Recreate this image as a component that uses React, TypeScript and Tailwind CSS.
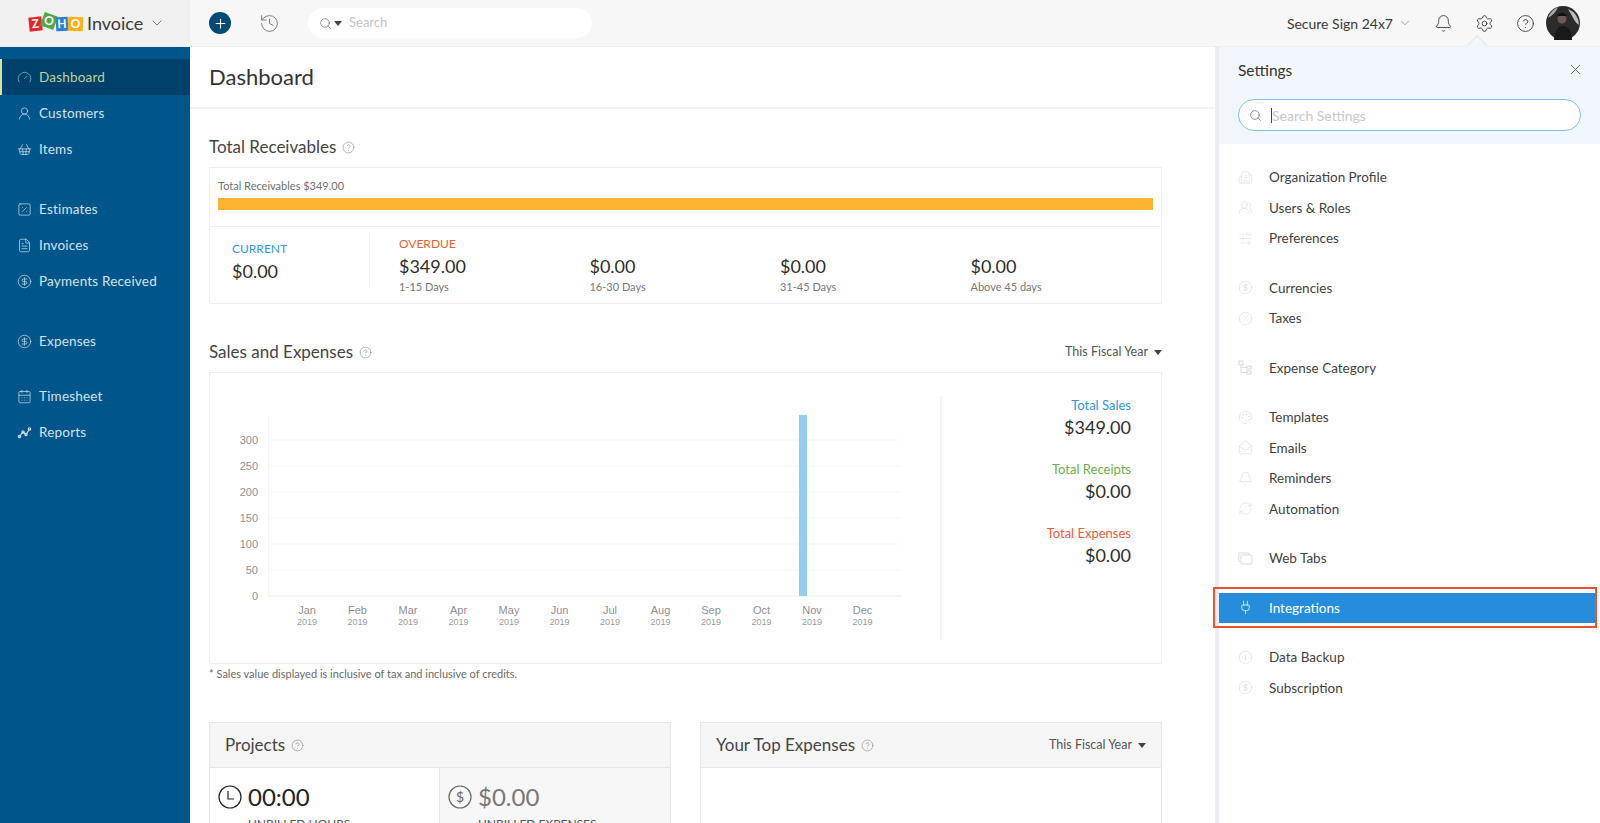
import {
  Bell,
  Building2,
  ChevronDown,
  CircleDollarSign,
  CircleHelp,
  CirclePercent,
  FileText,
  History,
  MailOpen,
  Palette,
  Plug,
  Plus,
  RefreshCw,
  Search,
  Settings,
  ShoppingBasket,
  SlidersHorizontal,
  SquarePercent,
  UserRound,
  UsersRound,
  X,
  CalendarDays,
  Gauge,
  CircleArrowDown,
} from "lucide-react";

const font = "[font-family:Lato,'Open_Sans',sans-serif]";

function Caret() {
  return (
    <svg width="8" height="5" viewBox="0 0 8 5" className="shrink-0">
      <path d="M0 0h8L4 5z" fill="#444" />
    </svg>
  );
}

function Help() {
  return <CircleHelp size={13} strokeWidth={1.2} className="text-[#8d8d8d] shrink-0" />;
}

function ReportsIcon() {
  return (
    <svg width="15" height="15" viewBox="0 0 15 15" fill="none" stroke="currentColor" strokeWidth="1.1">
      <path d="M2.5 11.5 6 7l3 2.5L12.5 4" />
      <circle cx="2.5" cy="11.5" r="1.2" />
      <circle cx="6" cy="7" r="1.2" />
      <circle cx="9" cy="9.5" r="1.2" />
      <circle cx="12.5" cy="4" r="1.2" />
    </svg>
  );
}

function TreeIcon() {
  return (
    <svg width="14" height="15" viewBox="0 0 14 15" fill="none" stroke="currentColor" strokeWidth="1">
      <rect x="1" y="1" width="4" height="4" />
      <rect x="9" y="6" width="4" height="3" />
      <rect x="9" y="11" width="4" height="3" />
      <path d="M3 5v7.5h6M3 7.5h6" />
    </svg>
  );
}

function TabsIcon() {
  return (
    <svg width="15" height="13" viewBox="0 0 15 13" fill="none" stroke="currentColor" strokeWidth="1">
      <path d="M2 9.5H.8V1h10v1.5" />
      <rect x="3" y="3" width="11" height="9" rx="1" />
    </svg>
  );
}

function Logo() {
  const tiles = [
    { l: "Z", c: "bg-[#e2262c] -rotate-6 mt-[3px]", w: "w-[13px]" },
    { l: "O", c: "bg-[#4fa845] rotate-[20deg]", w: "w-[14px]" },
    { l: "H", c: "bg-[#2a7fd0] -rotate-3 mt-[3px]", w: "w-[12px]" },
    { l: "O", c: "bg-[#f8b21c] rotate-2 mt-[3px]", w: "w-[15px]" },
  ];
  return (
    <div className="flex items-start h-[18px]">
      {tiles.map((t, i) => (
        <span
          key={i}
          className={`${t.w} h-[14px] ${t.c} flex items-center justify-center text-white text-[12px] font-bold leading-none`}
        >
          {t.l}
        </span>
      ))}
    </div>
  );
}

const navGroups = [
  [
    { label: "Dashboard", icon: <Gauge size={15} strokeWidth={1.1} />, active: true },
    { label: "Customers", icon: <UserRound size={15} strokeWidth={1.1} /> },
    { label: "Items", icon: <ShoppingBasket size={15} strokeWidth={1.1} /> },
  ],
  [
    { label: "Estimates", icon: <SquarePercent size={15} strokeWidth={1.1} /> },
    { label: "Invoices", icon: <FileText size={15} strokeWidth={1.1} /> },
    { label: "Payments Received", icon: <CircleDollarSign size={15} strokeWidth={1.1} /> },
  ],
  [{ label: "Expenses", icon: <CircleDollarSign size={15} strokeWidth={1.1} /> }],
  [
    { label: "Timesheet", icon: <CalendarDays size={15} strokeWidth={1.1} /> },
    { label: "Reports", icon: <ReportsIcon /> },
  ],
];

const settingGroups = [
  [
    { label: "Organization Profile", icon: <Building2 size={15} strokeWidth={1} /> },
    { label: "Users & Roles", icon: <UsersRound size={15} strokeWidth={1} /> },
    { label: "Preferences", icon: <SlidersHorizontal size={15} strokeWidth={1} /> },
  ],
  [
    { label: "Currencies", icon: <CircleDollarSign size={15} strokeWidth={1} /> },
    { label: "Taxes", icon: <CirclePercent size={15} strokeWidth={1} /> },
  ],
  [{ label: "Expense Category", icon: <TreeIcon /> }],
  [
    { label: "Templates", icon: <Palette size={15} strokeWidth={1} /> },
    { label: "Emails", icon: <MailOpen size={15} strokeWidth={1} /> },
    { label: "Reminders", icon: <Bell size={15} strokeWidth={1} /> },
    { label: "Automation", icon: <RefreshCw size={15} strokeWidth={1} /> },
  ],
  [{ label: "Web Tabs", icon: <TabsIcon /> }],
  [{ label: "Integrations", icon: <Plug size={15} strokeWidth={1.2} />, selected: true }],
  [
    { label: "Data Backup", icon: <CircleArrowDown size={15} strokeWidth={1} /> },
    { label: "Subscription", icon: <CircleDollarSign size={15} strokeWidth={1} /> },
  ],
];

const months = ["Jan", "Feb", "Mar", "Apr", "May", "Jun", "Jul", "Aug", "Sep", "Oct", "Nov", "Dec"];
const ticks = [300, 250, 200, 150, 100, 50, 0];

function Chart() {
  return (
    <svg
      width="730"
      height="290"
      viewBox="210 373 730 290"
      className="shrink-0 [font-family:'Liberation_Sans',sans-serif]"
    >
      <line x1="268.5" y1="415" x2="268.5" y2="596" stroke="#f4f4f4" />
      {ticks.map((t, i) => (
        <g key={t}>
          <line x1="268" y1={440 + i * 26} x2="902" y2={440 + i * 26} stroke={t === 0 ? "#ececec" : "#f5f5f5"} />
          <text x="258" y={444 + i * 26} textAnchor="end" fontSize="11" fill="#8f8f8f">
            {t}
          </text>
        </g>
      ))}
      <rect x="799" y="415" width="8" height="181" fill="#93cbf5" />
      {months.map((m, i) => (
        <g key={m} textAnchor="middle">
          <text x={307 + i * 50.5} y="614" fontSize="11" fill="#8f8f8f">
            {m}
          </text>
          <text x={307 + i * 50.5} y="625" fontSize="9" fill="#9a9a9a">
            2019
          </text>
        </g>
      ))}
    </svg>
  );
}

function Aging({ label, amount, days }: { label?: string; amount: string; days: string }) {
  return (
    <div className="w-[192px] pt-[8px]">
      <div className="h-[18px] text-[12px] leading-[18px] text-[#ee5c2e]">{label}</div>
      <div className="h-[26px] text-[18px] leading-[26px] text-[#2d2d2d]">{amount}</div>
      <div className="mt-[1px] h-[14px] text-[11px] leading-[14px] text-[#777]">{days}</div>
    </div>
  );
}

export default function App() {
  return (
    <div className={`relative h-screen w-full overflow-hidden bg-white flex flex-col ${font}`}>
      {/* top bar */}
      <header className="h-[47px] shrink-0 flex items-center bg-[#f7f7f7] border-b border-[#eeeeee]">
        <div className="w-[190px] h-full shrink-0 bg-[#f0f0f0] flex items-center pl-[29px]">
          <Logo />
          <span className="ml-[4px] text-[18px] text-[#3a3a3a]">Invoice</span>
          <ChevronDown size={16} strokeWidth={1.2} className="ml-[6px] text-[#555]" />
        </div>
        <div className="ml-[19px] w-[22px] h-[22px] rounded-full bg-[#004a76] flex items-center justify-center">
          <Plus size={15} strokeWidth={1.8} className="text-white" />
        </div>
        <History size={21} strokeWidth={1.1} className="ml-[28px] text-[#777]" />
        <div className="ml-[28px] w-[284px] h-[30px] rounded-full bg-white flex items-center pl-[11px]">
          <Search size={13} strokeWidth={1.4} className="text-[#777]" />
          <span className="ml-[2px]">
            <Caret />
          </span>
          <span className="ml-[7px] text-[13px] text-[#c4c4c4]">Search</span>
        </div>
        <div className="ml-auto flex items-center pr-[20px]">
          <span className="text-[14px] text-[#3a3a3a]">Secure Sign 24x7</span>
          <ChevronDown size={14} strokeWidth={1} className="ml-[5px] text-[#666]" />
          <Bell size={19} strokeWidth={1.1} className="ml-[22px] text-[#333]" />
          <Settings size={19} strokeWidth={1.1} className="ml-[22px] text-[#333]" />
          <CircleHelp size={19} strokeWidth={1.1} className="ml-[22px] text-[#333]" />
          <svg width="34" height="34" viewBox="0 0 34 34" className="ml-[11px]">
            <circle cx="17" cy="17" r="17" fill="#2b2b2b" />
            <path d="M22 3a17 17 0 0 1 11 16c-4-2-6-8-11-16z" fill="#bdbdbd" />
            <path d="M2 12C4 6 8 3 12 1c-2 5-5 8-10 11z" fill="#a8a8a8" />
            <circle cx="16" cy="13" r="4.5" fill="#6b5a55" />
            <path d="M11 10c2-4 8-4 10 0z" fill="#111" />
            <path d="M8 34c0-9 4-14 9-14s9 5 9 14z" fill="#191919" />
          </svg>
        </div>
      </header>

      <div className="flex-1 flex min-h-0">
        {/* sidebar */}
        <nav className="w-[190px] shrink-0 bg-[#00568a] pt-[12px] text-[13.5px] tracking-[0.2px]">
          {navGroups.map((group, gi) => (
            <div key={gi} className={gi === 0 ? "" : gi === 3 ? "mt-[19px]" : "mt-[24px]"}>
              {group.map((item: any) => (
                <div
                  key={item.label}
                  className={
                    item.active
                      ? "h-[36px] flex items-center pl-[15px] bg-[#00416c] border-l-2 border-[#d7e2a6] text-[#bcd59a]"
                      : "h-[36px] flex items-center pl-[15px] border-l-2 border-transparent text-[#d4e3ee]"
                  }
                >
                  <span className={item.active ? "w-[22px] text-[#9fc3dc]" : "w-[22px] text-[#d4e3ee]"}>{item.icon}</span>
                  {item.label}
                </div>
              ))}
            </div>
          ))}
        </nav>

        {/* main column */}
        <main className="flex-1 min-w-0 overflow-hidden">
          <div className="h-[62px] border-b-2 border-[#f2f2f2] flex items-center pl-[19px] pb-[2px]">
            <h1 className="text-[22px] text-[#333]">Dashboard</h1>
          </div>

          <div className="ml-[19px] w-[953px]">
            <div className="mt-[26px] h-[24px] flex items-center gap-[6px] text-[17px] text-[#444]">
              Total Receivables <Help />
            </div>
            <section className="mt-[8px] h-[137px] border border-[#eeeeee]">
              <div className="h-[59px] border-b border-[#eeeeee] px-[8px]">
                <div className="pt-[10px] h-[30px] text-[11px] leading-[15px] text-[#6f6f6f]">Total Receivables $349.00</div>
                <div className="h-[12px] bg-[#ffb431]" />
              </div>
              <div className="flex">
                <div className="w-[161px] h-[55px] mt-[7px] border-r border-[#efefef] pl-[22px] pt-[6px] mr-[29px]">
                  <div className="h-[18px] text-[12px] leading-[18px] text-[#2f96e6]">CURRENT</div>
                  <div className="h-[26px] text-[18px] leading-[26px] text-[#2d2d2d]">$0.00</div>
                </div>
                <Aging label="OVERDUE" amount="$349.00" days="1-15 Days" />
                <Aging amount="$0.00" days="16-30 Days" />
                <Aging amount="$0.00" days="31-45 Days" />
                <Aging amount="$0.00" days="Above 45 days" />
              </div>
            </section>

            <div className="mt-[36px] h-[24px] flex items-center gap-[6px] text-[17px] text-[#444]">
              Sales and Expenses <Help />
              <span className="ml-auto flex items-center gap-[6px] text-[12.5px] text-[#555]">
                This Fiscal Year <Caret />
              </span>
            </div>
            <section className="mt-[8px] h-[292px] border border-[#eeeeee] flex">
              <Chart />
              <div className="flex-1 my-[23px] border-l-2 border-[#f3f3f3] pr-[30px] text-right">
                <div className="h-[18px] text-[13px] leading-[18px] text-[#2f96e6]">Total Sales</div>
                <div className="h-[26px] text-[18px] leading-[26px] text-[#2d2d2d] mb-[20px]">$349.00</div>
                <div className="h-[18px] text-[13px] leading-[18px] text-[#6ab04c]">Total Receipts</div>
                <div className="h-[26px] text-[18px] leading-[26px] text-[#2d2d2d] mb-[20px]">$0.00</div>
                <div className="h-[18px] text-[13px] leading-[18px] text-[#ee5c3a]">Total Expenses</div>
                <div className="h-[26px] text-[18px] leading-[26px] text-[#2d2d2d]">$0.00</div>
              </div>
            </section>
            <p className="mt-[3px] h-[14px] text-[11px] leading-[14px] text-[#6a6a6a]">
              * Sales value displayed is inclusive of tax and inclusive of credits.
            </p>

            <div className="mt-[41px] flex gap-[29px]">
              <section className="w-[462px] border border-[#e6e6e6]">
                <div className="h-[45px] bg-[#f5f5f5] border-b border-[#e6e6e6] flex items-center gap-[6px] pl-[15px] text-[17px] text-[#444]">
                  Projects <Help />
                </div>
                <div className="flex h-[70px]">
                  <div className="w-[230px] pl-[8px] pt-[14px] flex items-start border-r border-[#e6e6e6]">
                    <svg width="24" height="24" viewBox="0 0 24 24" fill="none" stroke="#222" strokeWidth="1.2" className="mt-[3px]">
                      <circle cx="12" cy="12" r="11" />
                      <path d="M10 6v8h6" />
                    </svg>
                    <div className="ml-[6px]">
                      <div className="text-[24px] leading-[30px] text-[#222]">00:00</div>
                      <div className="mt-[3px] text-[12px] text-[#555]">UNBILLED HOURS</div>
                    </div>
                  </div>
                  <div className="flex-1 bg-[#f7f7f7] pl-[8px] pt-[14px] flex items-start">
                    <svg width="24" height="24" viewBox="0 0 24 24" fill="none" stroke="#666" strokeWidth="1.2" className="mt-[3px]">
                      <circle cx="12" cy="12" r="11" />
                      <text x="12" y="17" textAnchor="middle" fontSize="14" fill="#666" stroke="none">
                        $
                      </text>
                    </svg>
                    <div className="ml-[6px]">
                      <div className="text-[24px] leading-[30px] text-[#777]">$0.00</div>
                      <div className="mt-[3px] text-[12px] text-[#555]">UNBILLED EXPENSES</div>
                    </div>
                  </div>
                </div>
              </section>
              <section className="w-[462px] border border-[#e6e6e6]">
                <div className="h-[45px] bg-[#f5f5f5] border-b border-[#e6e6e6] flex items-center gap-[6px] px-[15px] text-[17px] text-[#444]">
                  Your Top Expenses <Help />
                  <span className="ml-auto flex items-center gap-[6px] text-[12.5px] text-[#555]">
                    This Fiscal Year <Caret />
                  </span>
                </div>
                <div className="h-[70px]" />
              </section>
            </div>
          </div>
        </main>
      </div>

      {/* settings panel */}
      <aside className="absolute top-[47px] right-0 bottom-0 w-[381px] bg-white border-l-0 shadow-[-4px_0_0_#e9edf1]">
        <div className="absolute -top-[9px] left-[251px] w-[14px] h-[14px] rotate-45 bg-[#f1f6fd] border-l border-t border-[#e6e6e6]" />
        <div className="relative h-[97px] bg-[#f1f6fd] pl-[19px] pr-[19px]">
          <div className="h-[47px] flex items-center justify-between pt-[1px]">
            <span className="text-[15.5px] text-[#333]">Settings</span>
            <X size={17} strokeWidth={1.2} className="text-[#555] mr-[-3px] mb-[4px]" />
          </div>
          <div className="mt-[5px] w-[343px] h-[32px] rounded-full bg-white border border-[#7fc0ee] flex items-center pl-[10px]">
            <Search size={13} strokeWidth={1.5} className="text-[#777]" />
            <span className="ml-[9px] w-px h-[15px] bg-[#444]" />
            <span className="text-[14px] text-[#c9c9c9]">Search Settings</span>
          </div>
        </div>
        <div className="pt-[18px] text-[13.5px] text-[#3f3f3f]">
          {settingGroups.map((group, gi) => (
            <div key={gi} className={gi === 0 ? "" : "mt-[19px]"}>
              {group.map((item: any) =>
                item.selected ? (
                  <div key={item.label} className="relative mr-[5px]">
                    <div className="h-[30.5px] bg-[#268ddd] flex items-center text-white">
                      <span className="w-[50px] pl-[19px]">{item.icon}</span>
                      {item.label}
                    </div>
                    <div className="absolute -left-[6px] -right-[2px] -top-[6px] -bottom-[5px] border-2 border-[#ee4f2e] pointer-events-none" />
                  </div>
                ) : (
                  <div key={item.label} className="h-[30.5px] flex items-center">
                    <span className="w-[50px] pl-[19px] text-[#d5dadd]">{item.icon}</span>
                    {item.label}
                  </div>
                )
              )}
            </div>
          ))}
        </div>
      </aside>
    </div>
  );
}
